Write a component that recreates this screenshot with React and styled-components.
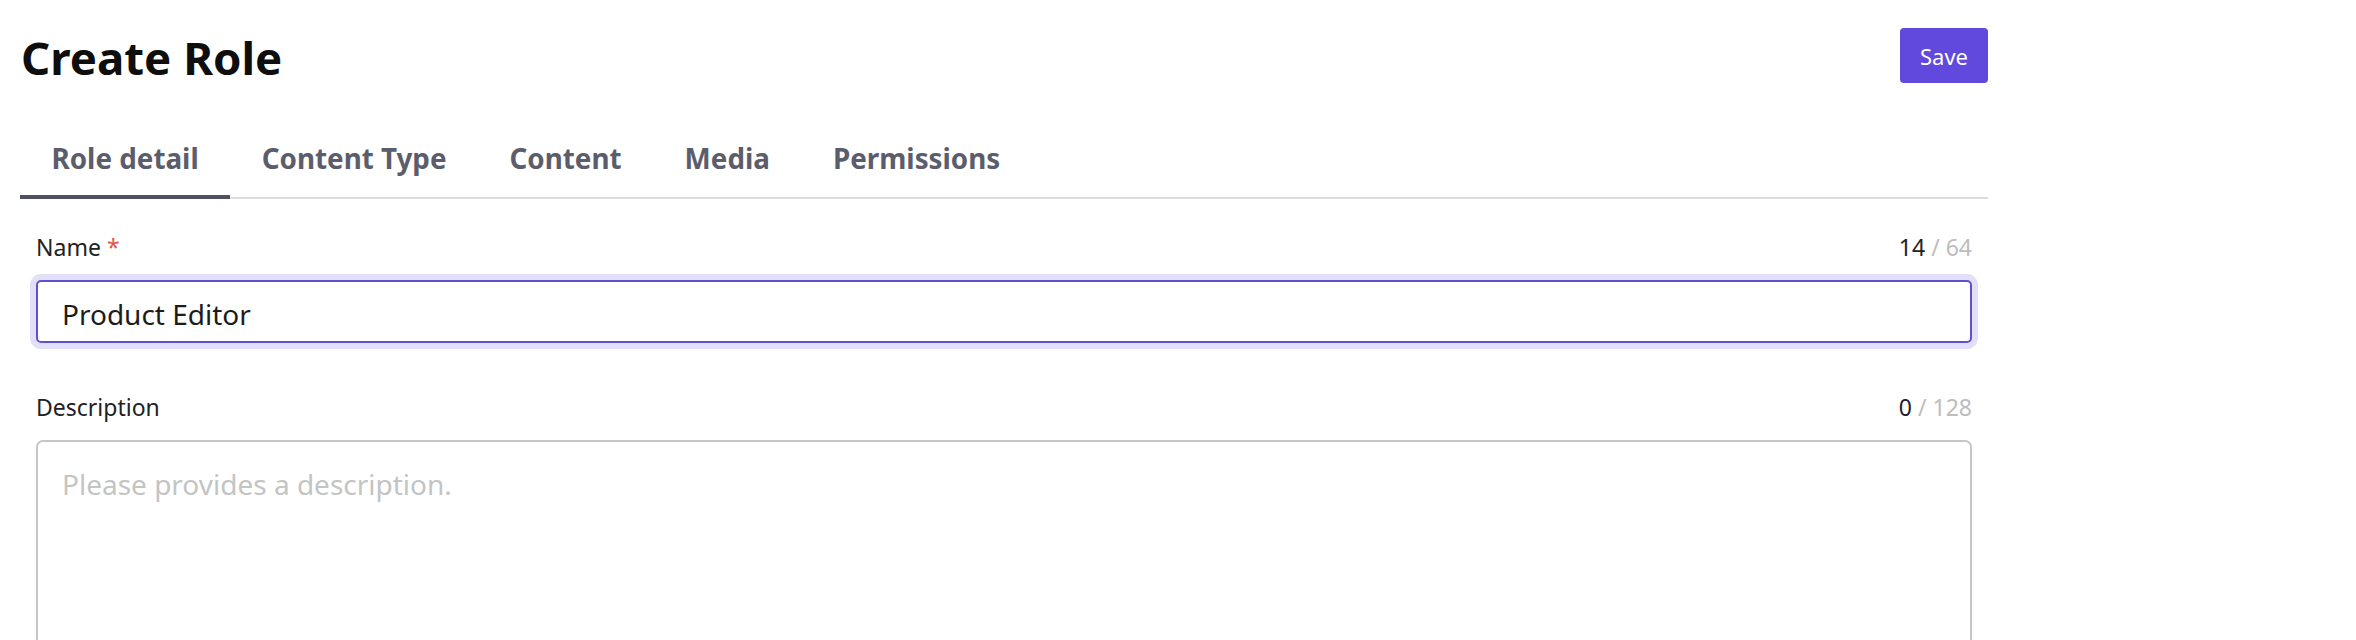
import React from "react";
import styled, { createGlobalStyle } from "styled-components";

const GlobalStyle = createGlobalStyle`
  body {
    margin: 0;
    background: #ffffff;
    font-family: "Noto Sans", "Open Sans", sans-serif;
  }
`;

const Page = styled.div`
  width: 1968px;
  padding: 28px 0 0 20px;
`;

const Header = styled.div`
  display: flex;
  align-items: center;
  justify-content: space-between;
  height: 55px;
`;

const Title = styled.h1`
  margin: 3px 0 0 1px;
  font-size: 45.6px;
  line-height: 55px;
  font-weight: 700;
  color: #0e0e0e;
`;

const SaveButton = styled.button`
  width: 88px;
  height: 55px;
  border: none;
  border-radius: 4px;
  background: #6249de;
  color: #ffffff;
  font-family: "Noto Sans", sans-serif;
  font-size: 22px;
  padding: 0;
`;

const TabList = styled.div`
  display: flex;
  margin-top: 57px;
  border-bottom: 2px solid #dcdcdf;
`;

const Tab = styled.div`
  padding: 0 31.5px 19px;
  margin-bottom: -2px;
  font-size: 27.8px;
  line-height: 36px;
  font-weight: 700;
  color: #5c5d6c;
  border-bottom: 4px solid ${(p) => (p.$active ? "#4f5061" : "transparent")};
`;

const Form = styled.div`
  display: flex;
  flex-direction: column;
  gap: 48px;
  padding: 32px 16px 0;
`;

const Field = styled.div`
  display: flex;
  flex-direction: column;
  gap: 17px;
`;

const LabelRow = styled.div`
  display: flex;
  justify-content: space-between;
  font-size: 23px;
  line-height: 32px;
  color: #222222;
`;

const Required = styled.span`
  margin-left: 6px;
  color: #dd5a4c;
`;

const Counter = styled.span`
  color: #222222;
`;

const Max = styled.span`
  color: #bdbdbd;
`;

const TextInput = styled.input`
  box-sizing: border-box;
  width: 100%;
  height: 63px;
  padding: 4px 24px 0;
  border: 2px solid #5e50d2;
  border-radius: 5px;
  box-shadow: 0 0 0 6px #e3dff8;
  outline: none;
  font-family: "Noto Sans", sans-serif;
  font-size: 28px;
  line-height: 55px;
  color: #1c1c1c;
`;

const TextArea = styled.textarea`
  box-sizing: border-box;
  width: 100%;
  height: 260px;
  padding: 22px 24px;
  border: 2px solid #c6c6c6;
  border-radius: 7px;
  outline: none;
  resize: none;
  font-family: "Noto Sans", sans-serif;
  font-size: 28px;
  line-height: 40px;
  color: #1c1c1c;

  &::placeholder {
    color: #c4c4c4;
  }
`;

const tabs = ["Role detail", "Content Type", "Content", "Media", "Permissions"];

export default function App() {
  return (
    <>
      <GlobalStyle />
      <Page>
        <Header>
          <Title>Create Role</Title>
          <SaveButton>Save</SaveButton>
        </Header>

        <TabList>
          {tabs.map((t, i) => (
            <Tab key={t} $active={i === 0}>
              {t}
            </Tab>
          ))}
        </TabList>

        <Form>
          <Field>
            <LabelRow>
              <span>
                Name<Required>*</Required>
              </span>
              <span>
                <Counter>14</Counter> <Max>/ 64</Max>
              </span>
            </LabelRow>
            <TextInput defaultValue="Product Editor" />
          </Field>

          <Field>
            <LabelRow>
              <span>Description</span>
              <span>
                <Counter>0</Counter> <Max>/ 128</Max>
              </span>
            </LabelRow>
            <TextArea placeholder="Please provides a description." />
          </Field>
        </Form>
      </Page>
    </>
  );
}
